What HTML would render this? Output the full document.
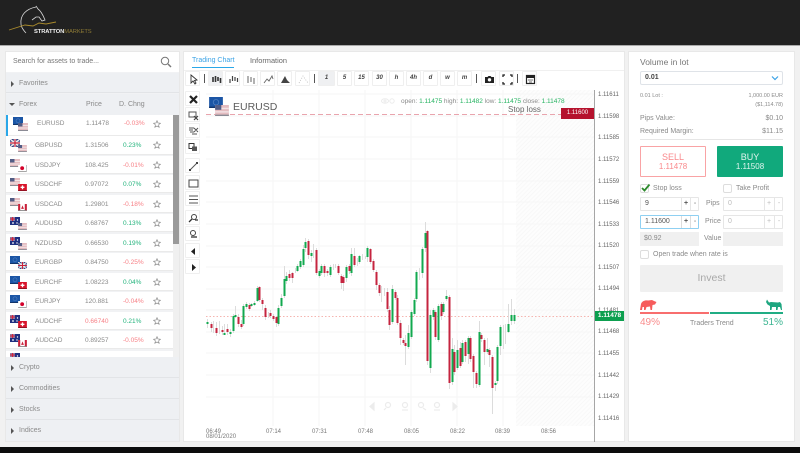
<!DOCTYPE html>
<html><head><meta charset="utf-8"><style>
*{box-sizing:border-box}
html,body{margin:0;padding:0}
body{width:800px;height:453px;position:relative;overflow:hidden;background:#f1f1f1;font-family:"Liberation Sans",sans-serif;color:#8a8a8a}
#w{position:absolute;left:0;top:0;width:800px;height:453px;overflow:hidden;filter:blur(.35px)}
.a,.t{position:absolute}
.t{white-space:nowrap;line-height:10px;height:10px}
.panel{position:absolute;background:#fff;border:1px solid #e8e8e8}
.acc{position:absolute;left:6px;width:168px;height:20px;background:#eef0f3;border-bottom:1px solid #e2e4e7}
.acc span{position:absolute;left:13px;top:6px;font-size:7px;line-height:10px;color:#8a8a8a}
.acc i{position:absolute;left:5px;top:8px;border-left:3px solid #555;border-top:3px solid transparent;border-bottom:3px solid transparent}
.row{position:absolute;left:6px;width:167px;height:18px;background:#fff;border-bottom:1px solid #eaeaea}
.row span{position:absolute;top:5px;font-size:6.5px;line-height:10px;color:#8a8a8a;white-space:nowrap}
.row .s{left:29px}.row .p{left:79px}.row .c{left:117px}
.r{color:#f77f85!important}.g{color:#23b37c!important}
.row svg.f{position:absolute;left:0;top:0;overflow:visible}
.row svg.st{position:absolute;left:147px;top:5px}
.btn{position:absolute;height:15px;width:15px;background:#fff;border:1px solid #efefef;border-radius:1px;font-size:6px;font-weight:bold;font-style:italic;text-align:center;line-height:13px;color:#444}
.btn svg{position:absolute;left:2px;top:2px}
.act{background:#eff0f2}
.sep{position:absolute;top:74px;width:1px;height:9px;background:#555}
.inp{position:absolute;height:14px;background:#fff;border:1px solid #e6e6e6;font-size:7px;line-height:12px;padding-left:4px;color:#555;border-radius:1px}
.inp b{position:absolute;top:0;width:9px;height:12px;border-left:1px solid #e6e6e6;text-align:center;padding:0;font-size:7px;line-height:12px;color:#555}
.cb{position:absolute;width:9px;height:9px;background:#fff;border:1px solid #ddd;border-radius:2px}
.lab{font-size:7px;color:#8a8a8a}
.ax{position:absolute;left:598px;font-size:6px;line-height:8px;color:#666;white-space:nowrap;margin-top:1px}
.tm{position:absolute;top:428px;font-size:6px;line-height:8px;color:#777;white-space:nowrap}
</style></head><body>
<svg width="0" height="0" style="position:absolute"><defs>
<symbol id="eu" viewBox="0 0 10 8"><rect width="10" height="8" fill="#1b55a5"/><rect y="7" width="10" height="1" fill="#12356b"/><circle cx="5" cy="3.8" r="2" fill="none" stroke="#4f7fc0" stroke-width=".6"/></symbol>
<symbol id="us" viewBox="0 0 10 8"><rect width="10" height="8" fill="#e4bcc0"/><rect y="2" width="10" height="1" fill="#f2e4e6"/><rect y="4.5" width="10" height="1" fill="#f2e4e6"/><rect width="4.5" height="3.5" fill="#535d85"/><rect y="7" width="10" height="1" fill="#8b8b95"/></symbol>
<symbol id="gb" viewBox="0 0 10 8"><rect width="10" height="8" fill="#2c3f80"/><path d="M0 0L10 8M10 0L0 8" stroke="#eee" stroke-width="1.4"/><path d="M5 0V8M0 4H10" stroke="#eee" stroke-width="2.4"/><path d="M5 0V8M0 4H10" stroke="#c8223a" stroke-width="1.2"/></symbol>
<symbol id="jp" viewBox="0 0 10 8"><rect width="10" height="8" fill="#fff"/><rect y="7" width="10" height="1" fill="#999"/><rect x="9" width="1" height="8" fill="#bbb"/><circle cx="4.6" cy="3.6" r="2.2" fill="#d4002a"/></symbol>
<symbol id="ch" viewBox="0 0 10 8"><rect width="10" height="8" fill="#d8152b"/><rect y="7" width="10" height="1" fill="#8a1020"/><path d="M5 1.6V6M2.8 3.8H7.2" stroke="#fff" stroke-width="1.5"/></symbol>
<symbol id="ca" viewBox="0 0 10 8"><rect width="10" height="8" fill="#fff"/><rect width="2.4" height="8" fill="#c9203a"/><rect x="7.6" width="2.4" height="8" fill="#c9203a"/><path d="M5 1.5L6.6 5.5H3.4Z" fill="#c9203a"/><rect y="7" width="10" height="1" fill="#888"/></symbol>
<symbol id="au" viewBox="0 0 10 8"><rect width="10" height="8" fill="#1f2f80"/><rect width="5" height="4" fill="#8d7fa5"/><path d="M2.5 0V4M0 2H5" stroke="#d8223a" stroke-width="1"/><circle cx="7.5" cy="3" r=".7" fill="#fff"/><circle cx="7" cy="6" r=".7" fill="#fff"/><circle cx="3" cy="6" r=".9" fill="#fff"/></symbol>
<symbol id="star" viewBox="0 0 10 10"><path d="M5 .8L6.2 3.7 9.4 4 7 6 7.7 9.1 5 7.5 2.3 9.1 3 6 .6 4 3.8 3.7Z" fill="none" stroke="#777" stroke-width=".7"/></symbol>
<pattern id="hatch" width="3" height="3" patternUnits="userSpaceOnUse" patternTransform="rotate(45)"><rect width="3" height="3" fill="#fdfdfd"/><rect width="1" height="3" fill="#f8f8f8"/></pattern>
</defs></svg>
<div id="w">

<!-- header -->
<div class="a" style="left:0;top:0;width:800px;height:45px;background:#212121"></div>
<div class="a" style="left:0;top:45px;width:800px;height:1px;background:#aaa"></div>
<svg class="a" style="left:0;top:0" width="110" height="45">
<path d="M36 7C26 9 20 15 21 24C21 27 24 31 26 33" fill="none" stroke="#d8d8d8" stroke-width=".8"/>
<path d="M36 6L38 9C41 11 43 15 45 20L42 21L39 17L36 17L32 20" fill="none" stroke="#d8d8d8" stroke-width=".8"/>
<path d="M9 30L25 25L33 26L39 23L46 24L56 22" fill="none" stroke="#a98a2c" stroke-width=".9"/>
</svg>
<div class="t" style="left:34px;top:27px;font-size:5.8px;font-weight:bold;color:#eee;letter-spacing:-.1px">STRATTON<span style="color:#8d7a35;font-weight:normal">MARKETS</span></div>

<!-- bottom -->
<div class="a" style="left:0;top:447px;width:800px;height:6px;background:#0c0c0c"></div>

<!-- LEFT PANEL -->
<div class="panel" style="left:5px;top:51px;width:175px;height:391px;background:#f1f2f4"></div>
<div class="a" style="left:6px;top:52px;width:173px;height:20px;background:#fff"></div>
<div class="t" style="left:13px;top:57px;font-size:7px;color:#777">Search for assets to trade...</div>
<svg class="a" style="left:160px;top:56px" width="12" height="12"><circle cx="5" cy="5" r="3.7" fill="none" stroke="#777" stroke-width="1"/><path d="M8 8L11 11" stroke="#777" stroke-width="1.4"/></svg>
<div class="acc" style="top:73px;width:173px"><i></i><span>Favorites</span></div>
<div class="a" style="left:6px;top:94px;width:173px;height:21px;background:#eef0f3"></div>
<div class="a" style="left:9px;top:103px;border-top:3px solid #555;border-left:3px solid transparent;border-right:3px solid transparent"></div>
<div class="t" style="left:19px;top:100px;font-size:7px">Forex</div>
<div class="t" style="left:86px;top:100px;font-size:7px">Price</div>
<div class="t" style="left:119px;top:100px;font-size:7px">D. Chng</div>

<!-- scrollbar -->
<div class="a" style="left:173px;top:115px;width:6px;height:242px;background:#f0f0f0"></div>
<div class="a" style="left:173px;top:115px;width:6px;height:129px;background:#9a9a9a"></div>

<!-- rows -->
<div class="row" style="top:115px;height:21px"><div class="a" style="left:0;top:0;width:2px;height:21px;background:#2aa7e8"></div>
<svg class="f" style="left:6px;top:2px" width="12" height="8"><use href="#eu"/></svg><svg class="f" style="left:12px;top:8px" width="10" height="8"><use href="#us"/></svg>
<span class="s" style="left:31px;top:4px">EURUSD</span><span class="p" style="left:80px;top:4px">1.11478</span><span class="c r" style="left:118px;top:4px">-0.03%</span><svg class="st" style="top:5px" width="8" height="8"><use href="#star"/></svg></div>

<div class="row" style="top:136px;height:19px"><svg class="f" style="left:4px;top:3px" width="10" height="8"><use href="#gb"/></svg><svg class="f" style="left:12px;top:9px" width="9" height="7"><use href="#us"/></svg><span class="s">GBPUSD</span><span class="p">1.31506</span><span class="c g">0.23%</span><svg class="st" width="8" height="8"><use href="#star"/></svg></div>
<div class="row" style="top:156px"><svg class="f" style="left:4px;top:3px" width="10" height="8"><use href="#us"/></svg><svg class="f" style="left:12px;top:9px" width="9" height="7"><use href="#jp"/></svg><span class="s">USDJPY</span><span class="p">108.425</span><span class="c r">-0.01%</span><svg class="st" width="8" height="8"><use href="#star"/></svg></div>
<div class="row" style="top:175px"><svg class="f" style="left:4px;top:3px" width="10" height="8"><use href="#us"/></svg><svg class="f" style="left:12px;top:9px" width="9" height="7"><use href="#ch"/></svg><span class="s">USDCHF</span><span class="p">0.97072</span><span class="c g">0.07%</span><svg class="st" width="8" height="8"><use href="#star"/></svg></div>
<div class="row" style="top:195px"><svg class="f" style="left:4px;top:3px" width="10" height="8"><use href="#us"/></svg><svg class="f" style="left:12px;top:9px" width="9" height="7"><use href="#ca"/></svg><span class="s">USDCAD</span><span class="p">1.29801</span><span class="c r">-0.18%</span><svg class="st" width="8" height="8"><use href="#star"/></svg></div>
<div class="row" style="top:214px"><svg class="f" style="left:4px;top:3px" width="10" height="8"><use href="#au"/></svg><svg class="f" style="left:12px;top:9px" width="9" height="7"><use href="#us"/></svg><span class="s">AUDUSD</span><span class="p">0.68767</span><span class="c g">0.13%</span><svg class="st" width="8" height="8"><use href="#star"/></svg></div>
<div class="row" style="top:234px"><svg class="f" style="left:4px;top:3px" width="10" height="8"><use href="#au"/></svg><svg class="f" style="left:12px;top:9px" width="9" height="7"><use href="#us"/></svg><span class="s">NZDUSD</span><span class="p">0.66530</span><span class="c g">0.19%</span><svg class="st" width="8" height="8"><use href="#star"/></svg></div>
<div class="row" style="top:253px"><svg class="f" style="left:4px;top:3px" width="10" height="8"><use href="#eu"/></svg><svg class="f" style="left:12px;top:9px" width="9" height="7"><use href="#gb"/></svg><span class="s">EURGBP</span><span class="p">0.84750</span><span class="c r">-0.25%</span><svg class="st" width="8" height="8"><use href="#star"/></svg></div>
<div class="row" style="top:273px"><svg class="f" style="left:4px;top:3px" width="10" height="8"><use href="#eu"/></svg><svg class="f" style="left:12px;top:9px" width="9" height="7"><use href="#ch"/></svg><span class="s">EURCHF</span><span class="p">1.08223</span><span class="c g">0.04%</span><svg class="st" width="8" height="8"><use href="#star"/></svg></div>
<div class="row" style="top:292px"><svg class="f" style="left:4px;top:3px" width="10" height="8"><use href="#eu"/></svg><svg class="f" style="left:12px;top:9px" width="9" height="7"><use href="#jp"/></svg><span class="s">EURJPY</span><span class="p">120.881</span><span class="c r">-0.04%</span><svg class="st" width="8" height="8"><use href="#star"/></svg></div>
<div class="row" style="top:312px"><svg class="f" style="left:4px;top:3px" width="10" height="8"><use href="#au"/></svg><svg class="f" style="left:12px;top:9px" width="9" height="7"><use href="#ch"/></svg><span class="s">AUDCHF</span><span class="p r">0.66740</span><span class="c g">0.21%</span><svg class="st" width="8" height="8"><use href="#star"/></svg></div>
<div class="row" style="top:331px"><svg class="f" style="left:4px;top:3px" width="10" height="8"><use href="#au"/></svg><svg class="f" style="left:12px;top:9px" width="9" height="7"><use href="#ca"/></svg><span class="s">AUDCAD</span><span class="p">0.89257</span><span class="c r">-0.05%</span><svg class="st" width="8" height="8"><use href="#star"/></svg></div>
<div class="row" style="top:351px;height:6px;overflow:hidden;border:0"><svg class="f" style="left:4px;top:2px" width="10" height="8"><use href="#au"/></svg></div>

<div class="acc" style="top:357px;width:173px;height:21px"><i></i><span>Crypto</span></div>
<div class="acc" style="top:378px;width:173px;height:21px"><i></i><span>Commodities</span></div>
<div class="acc" style="top:399px;width:173px;height:21px"><i></i><span>Stocks</span></div>
<div class="acc" style="top:420px;width:173px;height:21px;border-bottom:0"><i></i><span>Indices</span></div>

<!-- CENTER PANEL -->
<div class="panel" style="left:183px;top:51px;width:442px;height:391px"></div>
<div class="t" style="left:192px;top:56px;font-size:7px;color:#3ba3e6">Trading Chart</div>
<div class="a" style="left:192px;top:67px;width:42px;height:1px;background:#2aa7e8"></div>
<div class="t" style="left:250px;top:56px;font-size:7.4px;color:#666">Information</div>
<div class="a" style="left:184px;top:70px;width:440px;height:1px;background:#f0f0f0"></div>

<!-- top toolbar -->
<div class="btn" style="left:185px;top:71px"><svg width="11" height="11"><path d="M3 1L3 9L5 7L7 10L8 9L6.500 6.500L9 6Z" fill="#fff" stroke="#333" stroke-width=".9"/></svg></div>
<div class="sep" style="left:204px"></div>
<div class="btn act" style="left:208px;top:71px"><svg width="11" height="11"><path d="M2 3V8M4.500 2V8M7 3V7M9.500 4V9" stroke="#333" stroke-width="1.600"/></svg></div>
<div class="btn" style="left:225px;top:71px"><svg width="11" height="11"><path d="M2 5V9M4.500 2V7M7 3V7M9.500 4V8" stroke="#444" stroke-width="1.200"/></svg></div>
<div class="btn" style="left:243px;top:71px"><svg width="11" height="11"><path d="M2 2V9M5 3V8M8 4V10" stroke="#666" stroke-width="1"/></svg></div>
<div class="btn" style="left:260px;top:71px"><svg width="11" height="11"><path d="M1 9L4 5L6 7L9 2L10 5" fill="none" stroke="#666" stroke-width=".9"/></svg></div>
<div class="btn" style="left:277px;top:71px"><svg width="11" height="11"><path d="M1 9L5 2L7 6L10 9Z" fill="#444"/></svg></div>
<div class="btn" style="left:295px;top:71px"><svg width="11" height="11"><path d="M1 9L5 2L10 9" fill="none" stroke="#bbb" stroke-width=".8" stroke-dasharray="1 1.500"/></svg></div>
<div class="sep" style="left:314px"></div>
<div class="btn act" style="left:318px;top:71px;width:17px">1</div>
<div class="btn" style="left:337px;top:71px">5</div>
<div class="btn" style="left:354px;top:71px">15</div>
<div class="btn" style="left:372px;top:71px">30</div>
<div class="btn" style="left:389px;top:71px">h</div>
<div class="btn" style="left:406px;top:71px">4h</div>
<div class="btn" style="left:423px;top:71px">d</div>
<div class="btn" style="left:440px;top:71px">w</div>
<div class="btn" style="left:457px;top:71px">m</div>
<div class="sep" style="left:476px"></div>
<div class="btn" style="left:481px;top:71px"><svg width="11" height="11"><path d="M1 3H3.500L4.500 2H6.500L7.500 3H10V9H1Z" fill="#222"/><circle cx="5.500" cy="5.800" r="1.700" fill="#fff"/></svg></div>
<div class="btn" style="left:499px;top:71px"><svg width="11" height="11"><path d="M1 3V1H3M8 1H10V3M1 8V10H3M8 10H10V8" fill="none" stroke="#222" stroke-width="1.300"/></svg></div>
<div class="sep" style="left:517px"></div>
<div class="btn" style="left:522px;top:71px"><svg width="11" height="11"><rect x="1.500" y="1.500" width="8" height="8" fill="#fff" stroke="#222" stroke-width="1.200"/><rect x="1" y="1" width="9" height="3" fill="#222"/><path d="M3 6H8M4 8H7" stroke="#444" stroke-width=".8"/></svg></div>

<!-- left tools -->
<div class="btn" style="left:185px;top:91px"><svg width="11" height="11"><path d="M2 2L9 9M9 2L2 9" stroke="#222" stroke-width="2.200"/></svg></div>
<div class="btn" style="left:185px;top:107px"><svg width="11" height="11"><rect x="1" y="2" width="7" height="5" fill="none" stroke="#555"/><path d="M6 6L10 10M10 6L6 10" stroke="#444" stroke-width="1.200"/></svg></div>
<div class="btn" style="left:185px;top:123px"><svg width="11" height="11"><path d="M1 2H6M1 4H5M2 6H6M4 8H9M6 2L10 6M10 2L6 6" stroke="#555" stroke-width="1"/></svg></div>
<div class="btn" style="left:185px;top:139px"><svg width="11" height="11"><rect x="1" y="1.500" width="5" height="5" fill="none" stroke="#333"/><rect x="4" y="4.500" width="5" height="4.500" fill="#555"/></svg></div>
<div class="btn" style="left:185px;top:158px"><svg width="11" height="11"><path d="M2 9L9 2" stroke="#555" stroke-width="1"/><rect x="1" y="8" width="2" height="2" fill="#444"/><rect x="8" y="1" width="2" height="2" fill="#444"/></svg></div>
<div class="btn" style="left:185px;top:175px"><svg width="11" height="11"><rect x="1" y="2" width="9" height="7" fill="none" stroke="#444"/></svg></div>
<div class="btn" style="left:185px;top:191px"><svg width="11" height="11"><path d="M1 2H10M1 5.500H10M1 9H10" stroke="#555" stroke-width="1"/></svg></div>
<div class="btn" style="left:185px;top:210px"><svg width="11" height="11"><circle cx="6" cy="4" r="2.500" fill="none" stroke="#444"/><path d="M4 6L1 9M7 7H10" stroke="#333" stroke-width="1.300"/></svg></div>
<div class="btn" style="left:185px;top:226px"><svg width="11" height="11"><circle cx="5" cy="4" r="2.500" fill="none" stroke="#444"/><path d="M3 8H9" stroke="#333" stroke-width="1.300"/></svg></div>
<div class="btn" style="left:185px;top:243px"><svg width="11" height="11"><path d="M7 2V9L3 5.500Z" fill="#222"/></svg></div>
<div class="btn" style="left:185px;top:259px"><svg width="11" height="11"><path d="M4 2V9L8 5.500Z" fill="#222"/></svg></div>

<!-- chart -->
<svg class="a" style="left:206px;top:90px" width="389" height="340" viewBox="206 90 389 340">
<rect x="516" y="90" width="78" height="336" fill="url(#hatch)"/>
<path d="M206 94H594M206 116H594M206 137H594M206 159H594M206 181H594M206 202H594M206 224H594M206 246H594M206 267H594M206 289H594M206 310H594M206 332H594M206 353H594M206 375H594M206 397H594M273 90V426M319 90V426M365 90V426M411 90V426M457 90V426M503 90V426" stroke="#f6f6f6" stroke-width="1" fill="none"/>
<path d="M206 114.500H561" stroke="#e9a4ad" stroke-width="1" stroke-dasharray="5 3"/>
<path d="M206 316.500H594" stroke="#f5b5b0" stroke-width="1" stroke-dasharray="1.500 2"/>
<path fill="none" stroke="#dcdcdc" stroke-width="1" d="M207.500 319V328M211.500 322V332M213.500 321V333M216.500 322V336M219.500 321V334M222.500 326V335M224.500 324V335M227.500 324V335M230.500 329V337M233.500 314V333M235.500 306V318M238.500 314V327M241.500 320V329M243.500 304V326M246.500 302V309M249.500 303V311M251.500 303V307M254.500 301V306M257.500 286V302M259.500 286V302M262.500 298V310M265.500 305V320M268.500 312V318M270.500 310V318M273.500 314V321M276.500 316V327M278.500 305V326M281.500 294V308M284.500 266V298M286.500 272V284M289.500 270V281M292.500 272V283M295.500 268V273M297.500 264V272M300.500 259V269M303.500 245V267M305.500 238V252M308.500 239V259M311.500 250V262M313.500 244V258M316.500 248V275M319.500 269V278M321.500 264V275M324.500 264V277M327.500 269V276M330.500 265V277M333.500 264V270M335.500 264V268M338.500 264V275M341.500 274V289M343.500 275V291M346.500 265V282M349.500 264V274M351.500 248V276M354.500 248V267M357.500 258V266M359.500 255V264M362.500 254V260M365.500 256V259M367.500 246V262M370.500 248V264M373.500 259V272M376.500 270V290M379.500 283V296M381.500 286V302M384.500 288V296M387.500 288V312M389.500 306V330M392.500 285V324M395.500 290V300M397.500 295V325M400.500 320V345M403.500 338V345M405.500 335V365M408.500 325V349M411.500 310V339M414.500 298V316M416.500 270V302M419.500 268V280M422.500 247V278M425.500 222V252M427.500 230V365M430.500 310V373M433.500 308V320M435.500 310V340M438.500 304V342M441.500 302V320M443.500 302V314M446.500 290V301M449.500 295V389M452.500 338V385M454.500 345V375M457.500 340V370M460.500 342V368M462.500 340V364M465.500 340V362M468.500 336V364M470.500 336V362M473.500 354V388M476.500 371V388M479.500 321V387M481.500 333V342M484.500 338V365M487.500 338V354M489.500 348V367M492.500 355V414M495.500 381V391M497.500 345V384M500.500 325V355M503.500 325V349M505.500 324V344M508.500 304V333M511.500 299V325M514.500 309V324"/>
<path fill="none" stroke="#12a94f" stroke-width="2" d="M207.500 322V324M224.500 333V335M230.500 332V334M233.500 316V331M235.500 315V317M243.500 306V324M246.500 304V307M251.500 304V306M254.500 303V305M257.500 288V301M278.500 308V324M281.500 298V306M284.500 279V296M286.500 276V281M297.500 266V271M300.500 261V267M303.500 249V265M305.500 242V248M311.500 253V256M319.500 271V276M321.500 266V273M330.500 267V275M346.500 267V278M351.500 254V273M359.500 256V262M367.500 248V257M392.500 289V322M408.500 333V347M411.500 312V337M414.500 300V314M416.500 272V299M422.500 249V273M425.500 233V248M430.500 315V368M433.500 310V317M438.500 306V340M443.500 304V312M446.500 296V299M452.500 349V382M457.500 350V368M462.500 343V362M468.500 338V354M479.500 332V385M487.500 349V352M495.500 383V385M497.500 347V381M500.500 327V346M508.500 324V332M511.500 315V321M514.500 315V321"/>
<path fill="none" stroke="#c5243f" stroke-width="2" d="M211.500 324V328M216.500 328V333M222.500 330V332M227.500 329V332M238.500 317V324M241.500 324V327M249.500 305V309M259.500 287V300M262.500 300V304M265.500 308V317M270.500 313V316M273.500 316V319M276.500 317V323M289.500 274V278M292.500 273V278M308.500 241V255M316.500 250V273M324.500 266V273M327.500 271V273M338.500 266V273M341.500 276V283M343.500 277V283M349.500 266V271M354.500 256V265M370.500 249V262M373.500 261V270M376.500 272V285M379.500 285V293M387.500 292V309M389.500 310V325M395.500 292V298M397.500 298V323M400.500 323V338M403.500 340V343M405.500 343V346M427.500 231V361M435.500 312V337M441.500 304V316M449.500 297V383M454.500 352V372M460.500 348V366M465.500 342V356M470.500 338V359M473.500 356V372M476.500 373V384M481.500 335V339M484.500 340V352M489.500 350V355M492.500 357V388"/>
<!-- faint controls -->
<g fill="none" stroke="#ececec" stroke-width="1.200"><path d="M374 403V410L370 406.500Z" fill="#ececec"/><circle cx="388" cy="405" r="2.500"/><path d="M386 408L384 410"/><circle cx="405" cy="405" r="2.500"/><path d="M402 410H408"/><circle cx="421" cy="405" r="2.500"/><path d="M423 408L426 410"/><circle cx="437" cy="405" r="2.500"/><path d="M434 410H440"/><path d="M453 403V410L457 406.500Z" fill="#ececec"/></g>
<g fill="none" stroke="#ececec" stroke-width="1"><ellipse cx="385" cy="101" rx="3.500" ry="2.200"/><circle cx="385" cy="101" r="1"/><circle cx="392" cy="101" r="2.200"/></g>
</svg>
<div class="a" style="left:594px;top:90px;width:1px;height:352px;background:#a6a6a6"></div>

<svg class="a" style="left:209px;top:97px;overflow:visible" width="14" height="11"><use href="#eu"/></svg>
<svg class="a" style="left:215px;top:105px;overflow:visible" width="14" height="11"><use href="#us"/></svg>
<div class="t" style="left:233px;top:102px;font-size:10.500px;color:#5c5c5c">EURUSD</div>
<div class="t" style="left:401px;top:97px;font-size:6.500px;color:#8a8a8a">open: <span style="color:#28b463">1.11475</span> high: <span style="color:#28b463">1.11482</span> low: <span style="color:#28b463">1.11475</span> close: <span style="color:#28b463">1.11478</span></div>
<div class="t" style="left:508px;top:105px;font-size:8px;color:#666">Stop loss</div>
<div class="a" style="left:561px;top:108px;width:33px;height:11px;background:#b5122d;color:#fff;font-size:6px;line-height:11px;text-align:center">1.11600</div>

<div class="ax" style="top:90px">1.11611</div><div class="ax" style="top:112px">1.11598</div><div class="ax" style="top:133px">1.11585</div><div class="ax" style="top:155px">1.11572</div><div class="ax" style="top:177px">1.11559</div><div class="ax" style="top:198px">1.11546</div><div class="ax" style="top:220px">1.11533</div><div class="ax" style="top:241px">1.11520</div><div class="ax" style="top:263px">1.11507</div><div class="ax" style="top:284px">1.11494</div><div class="ax" style="top:306px">1.11481</div><div class="ax" style="top:327px">1.11468</div><div class="ax" style="top:349px">1.11455</div><div class="ax" style="top:371px">1.11442</div><div class="ax" style="top:392px">1.11429</div><div class="ax" style="top:414px">1.11416</div>
<div class="a" style="left:595px;top:311px;width:29px;height:10px;background:#0d9f4f;color:#fff;font-size:6.500px;font-weight:bold;line-height:10px;text-align:center">1.11478</div>

<div class="tm" style="left:206px">06:49</div><div class="tm" style="left:266px">07:14</div><div class="tm" style="left:312px">07:31</div><div class="tm" style="left:358px">07:48</div><div class="tm" style="left:404px">08:05</div><div class="tm" style="left:450px">08:22</div><div class="tm" style="left:495px">08:39</div><div class="tm" style="left:541px">08:56</div>
<div class="tm" style="left:206px;top:433px">08/01/2020</div>

<!-- RIGHT PANEL -->
<div class="panel" style="left:628px;top:51px;width:167px;height:391px"></div>
<div class="t" style="left:640px;top:57px;font-size:8.500px;color:#777">Volume in lot</div>
<div class="a" style="left:640px;top:71px;width:143px;height:14px;border:1px solid #dfe3e8;border-radius:2px;background:#fff"></div>
<div class="t" style="left:645px;top:73px;font-size:7px;color:#444;font-weight:bold">0.01</div>
<svg class="a" style="left:771px;top:75px" width="8" height="6"><path d="M1 1.500L4 4.500L7 1.500" fill="none" stroke="#3ba3e6" stroke-width="1.200"/></svg>
<div class="t" style="left:640px;top:91px;font-size:5.500px">0.01 Lot :</div>
<div class="t" style="right:17px;top:91px;font-size:5.500px">1,000.00 EUR</div>
<div class="t" style="right:17px;top:100px;font-size:5.500px">($1,114.78)</div>
<div class="t" style="left:640px;top:114px;font-size:7px">Pips Value:</div>
<div class="t" style="right:17px;top:114px;font-size:7px">$0.10</div>
<div class="t" style="left:640px;top:127px;font-size:7px">Required Margin:</div>
<div class="t" style="right:17px;top:127px;font-size:7px">$11.15</div>
<div class="a" style="left:640px;top:139px;width:143px;height:1px;background:#e6e6e6"></div>
<div class="a" style="left:640px;top:146px;width:66px;height:31px;border:1px solid #f9a3a5;background:#fff;border-radius:1px;text-align:center;color:#f9898c"><div style="font-size:9px;line-height:10px;margin-top:5px">SELL</div><div style="font-size:8px;line-height:9px">1.11478</div></div>
<div class="a" style="left:717px;top:146px;width:66px;height:31px;background:#11a97c;border-radius:1px;text-align:center;color:#e2f5ef"><div style="font-size:9px;line-height:10px;margin-top:6px">BUY</div><div style="font-size:8px;line-height:9px">1.11508</div></div>

<div class="cb" style="left:640px;top:184px"></div>
<svg class="a" style="left:641px;top:183px" width="10" height="9"><path d="M1 5L3.500 7.500L8.500 1.500" fill="none" stroke="#2d8a2d" stroke-width="1.800"/></svg>
<div class="t lab" style="left:653px;top:184px">Stop loss</div>
<div class="cb" style="left:723px;top:184px"></div>
<div class="t lab" style="left:736px;top:184px">Take Profit</div>

<div class="inp" style="left:640px;top:197px;width:59px">9<b style="left:40px;font-weight:bold">+</b><b style="left:49px;color:#999">-</b></div>
<div class="t lab" style="left:706px;top:199px">Pips</div>
<div class="inp" style="left:723px;top:197px;width:60px;color:#bbb">0<b style="left:40px;color:#bbb;font-weight:normal">+</b><b style="left:50px;color:#bbb;font-weight:normal">-</b></div>
<div class="inp" style="left:640px;top:215px;width:59px;border-color:#8fd0f2">1.11600<b style="left:40px;font-weight:bold;border-color:#ddd">+</b><b style="left:49px;color:#999;border-color:#ddd">-</b></div>
<div class="t lab" style="left:705px;top:217px">Price</div>
<div class="inp" style="left:723px;top:215px;width:60px;color:#bbb">0<b style="left:40px;color:#bbb;font-weight:normal">+</b><b style="left:50px;color:#bbb;font-weight:normal">-</b></div>
<div class="a" style="left:640px;top:232px;width:59px;height:14px;background:#f0f0f0;font-size:7px;line-height:14px;padding-left:4px">$0.92</div>
<div class="t lab" style="left:704px;top:234px">Value</div>
<div class="a" style="left:723px;top:232px;width:60px;height:14px;background:#f0f0f0"></div>
<div class="cb" style="left:640px;top:250px"></div>
<div class="t lab" style="left:653px;top:250px">Open trade when rate is</div>
<div class="a" style="left:640px;top:265px;width:143px;height:27px;background:#f0f0f0;border-radius:1px;text-align:center;font-size:10.500px;line-height:27px;color:#a8a8a8">Invest</div>

<svg class="a" style="left:640px;top:299px" width="17" height="12"><path d="M0 11L1 5C2 2 5 1 8 1.500L12 1L14 2L16.500 3L15 5.500L12.500 6L12 11H10.500L10 7.500L6.500 8L5.500 11H4L4 8L2.500 8L2 11Z" fill="#f65c5c"/></svg>
<svg class="a" style="left:766px;top:299px" width="17" height="12"><path d="M1 .5L3 3.500L5 3L12 3.500L14 3L15.500 5L16 11H15L14 8L12 8L11.500 11H10L10 8L6 8L5.500 11H4L4 7L1.500 5.500L0 3Z" fill="#1ea680"/></svg>
<div class="a" style="left:640px;top:312px;width:69px;height:2px;background:#f86e6e"></div>
<div class="a" style="left:710px;top:312px;width:73px;height:2px;background:#20ad84"></div>
<div class="t" style="left:640px;top:318px;font-size:10px;color:#f98c8c">49%</div>
<div class="t" style="left:690px;top:319px;font-size:7px;color:#8a8a8a">Traders Trend</div>
<div class="t" style="right:17px;top:318px;font-size:10px;color:#3cb592">51%</div>
</div>
</body></html>
